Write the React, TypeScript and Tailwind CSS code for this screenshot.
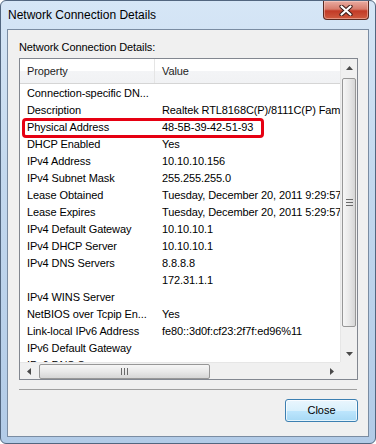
const rows: [string, string][] = [
  ["Connection-specific DN...", ""],
  ["Description", "Realtek RTL8168C(P)/8111C(P) Family PCI-E Gigabit Ethernet NIC (NDIS 6.20)"],
  ["Physical Address", "48-5B-39-42-51-93"],
  ["DHCP Enabled", "Yes"],
  ["IPv4 Address", "10.10.10.156"],
  ["IPv4 Subnet Mask", "255.255.255.0"],
  ["Lease Obtained", "Tuesday, December 20, 2011 9:29:57 AM"],
  ["Lease Expires", "Tuesday, December 20, 2011 5:29:57 PM"],
  ["IPv4 Default Gateway", "10.10.10.1"],
  ["IPv4 DHCP Server", "10.10.10.1"],
  ["IPv4 DNS Servers", "8.8.8.8"],
  ["", "172.31.1.1"],
  ["IPv4 WINS Server", ""],
  ["NetBIOS over Tcpip En...", "Yes"],
  ["Link-local IPv6 Address", "fe80::3d0f:cf23:2f7f:ed96%11"],
  ["IPv6 Default Gateway", ""],
  ["IPv6 DNS Servers", ""],
];

const Arrow = ({ dir }: { dir: "up" | "down" | "left" | "right" }) => {
  const pts = {
    up: "0,4 7,4 3.5,0",
    down: "0,0 7,0 3.5,4",
    left: "4,0 4,7 0,3.5",
    right: "0,0 0,7 4,3.5",
  }[dir];
  const vertical = dir === "up" || dir === "down";
  return (
    <svg width={vertical ? 7 : 4} height={vertical ? 4 : 7}>
      <polygon points={pts} fill="#4a4a4a" />
    </svg>
  );
};

const CloseGlyph = () => (
  <svg width="14" height="11" viewBox="0 0 14 11">
    <path d="M2.5 1.5 L11.5 9.5 M11.5 1.5 L2.5 9.5" stroke="#3d1c18" strokeWidth="4.2" strokeLinecap="round" />
    <path d="M2.5 1.5 L11.5 9.5 M11.5 1.5 L2.5 9.5" stroke="#ffffff" strokeWidth="2.2" strokeLinecap="round" />
  </svg>
);

const App = () => {
  return (
    <div className="w-[376px] h-[444px] flex flex-col border border-[#52667f] rounded-[6px] bg-[linear-gradient(180deg,#d6e6f6_0%,#c3d8ee_40%,#b2cbe7_100%)] font-['Liberation_Sans',Arial,sans-serif] text-black overflow-hidden">
      {/* title bar */}
      <div className="h-[28px] flex justify-between">
        <span className="pl-[7px] pt-[6px] text-[12px] leading-[16px] text-[#000]">Network Connection Details</span>
        <div className="mr-[6px] w-[46px] h-[19px] flex items-center justify-center rounded-b-[4px] border border-t-0 border-[#5a2a22] bg-[linear-gradient(180deg,#e9aca2_0%,#d77c6c_45%,#c23a26_55%,#cf5b40_100%)] shadow-[inset_0_0_0_1px_rgba(255,220,210,0.45)]">
          <CloseGlyph />
        </div>
      </div>

      {/* client area */}
      <div className="mx-[6px] h-[408px] border border-[#7a8ca2] bg-[#f0f0f0] flex flex-col text-[11px]">
        <div className="pl-[11px] pt-[11px] leading-[13px] tracking-[-0.1px]">Network Connection Details:</div>

        <div className="ml-[11px] mt-[4px] w-[339px] h-[322px] border border-[#828790] bg-white flex flex-col">
          <div className="h-[303px] flex">
            <div className="relative w-[320px] overflow-hidden tracking-[-0.1px]">
              <div className="h-[25px] flex border-b border-[#d5d5d5] bg-[linear-gradient(180deg,#ffffff_0%,#ffffff_50%,#f3f4f6_51%,#f1f2f4_100%)] text-[#1e1e1e] whitespace-nowrap">
                <div className="w-[135px] shrink-0 pl-[7px] flex items-center border-r border-[#e5e5e5]">Property</div>
                <div className="w-[400px] shrink-0 pl-[7px] flex items-center">Value</div>
              </div>
              <div className="pt-[1px]">
                {rows.map(([k, v], i) => (
                  <div key={i} className="h-[17px] flex items-center whitespace-nowrap">
                    <div className="w-[135px] shrink-0 pl-[7px] overflow-hidden">{k}</div>
                    <div className="shrink-0 pl-[7px]">{v}</div>
                  </div>
                ))}
              </div>
              <div className="absolute left-[2px] top-[59px] w-[242px] h-[20px] border-[3px] border-[#e60012] rounded-[4px]" />
            </div>

            {/* vertical scrollbar */}
            <div className="w-[17px] flex flex-col bg-[#f0f0f0] border-l border-[#e6e6e6]">
              <div className="h-[17px] flex items-center justify-center">
                <Arrow dir="up" />
              </div>
              <div className="flex-1 px-[1px] pt-[2px] pb-[2px] flex flex-col">
                <div className="h-[249px] rounded-[2px] border border-[#979797] bg-[linear-gradient(90deg,#f6f6f6_0%,#e9e9e9_50%,#d6d6d6_100%)] flex flex-col items-center justify-center gap-[2px]">
                  <div className="w-[7px] h-[1px] bg-[#6a6a6a]" />
                  <div className="w-[7px] h-[1px] bg-[#6a6a6a]" />
                  <div className="w-[7px] h-[1px] bg-[#6a6a6a]" />
                </div>
              </div>
              <div className="h-[17px] flex items-center justify-center">
                <Arrow dir="down" />
              </div>
            </div>
          </div>

          {/* horizontal scrollbar */}
          <div className="h-[17px] flex">
            <div className="w-[320px] flex items-center bg-[#f0f0f0] border-t border-[#e6e6e6]">
              <div className="w-[17px] flex justify-center">
                <Arrow dir="left" />
              </div>
              <div className="ml-[2px] w-[171px] h-[15px] rounded-[2px] border border-[#979797] bg-[linear-gradient(180deg,#f6f6f6_0%,#e9e9e9_50%,#d6d6d6_100%)] flex items-center justify-center gap-[2px]">
                <div className="w-[1px] h-[7px] bg-[#6a6a6a]" />
                <div className="w-[1px] h-[7px] bg-[#6a6a6a]" />
                <div className="w-[1px] h-[7px] bg-[#6a6a6a]" />
              </div>
              <div className="flex-1" />
              <div className="w-[17px] flex justify-center">
                <Arrow dir="right" />
              </div>
            </div>
            <div className="w-[17px] bg-[#f0f0f0]" />
          </div>
        </div>

        <div className="ml-[11px] mr-[11px] mt-[9px] h-[1px] bg-[#a0a0a0]" />

        <div className="mt-[9px] mr-[10px] flex justify-end">
          <button className="w-[73px] h-[23px] rounded-[3px] border border-[#3c7fb1] bg-[linear-gradient(180deg,#eaf6fd_0%,#d9f0fc_50%,#bee6fd_51%,#a7d9f5_100%)] shadow-[inset_0_0_0_1px_rgba(255,255,255,0.7)] text-[11px] text-black">
            Close
          </button>
        </div>
      </div>
    </div>
  );
};

export default App;
